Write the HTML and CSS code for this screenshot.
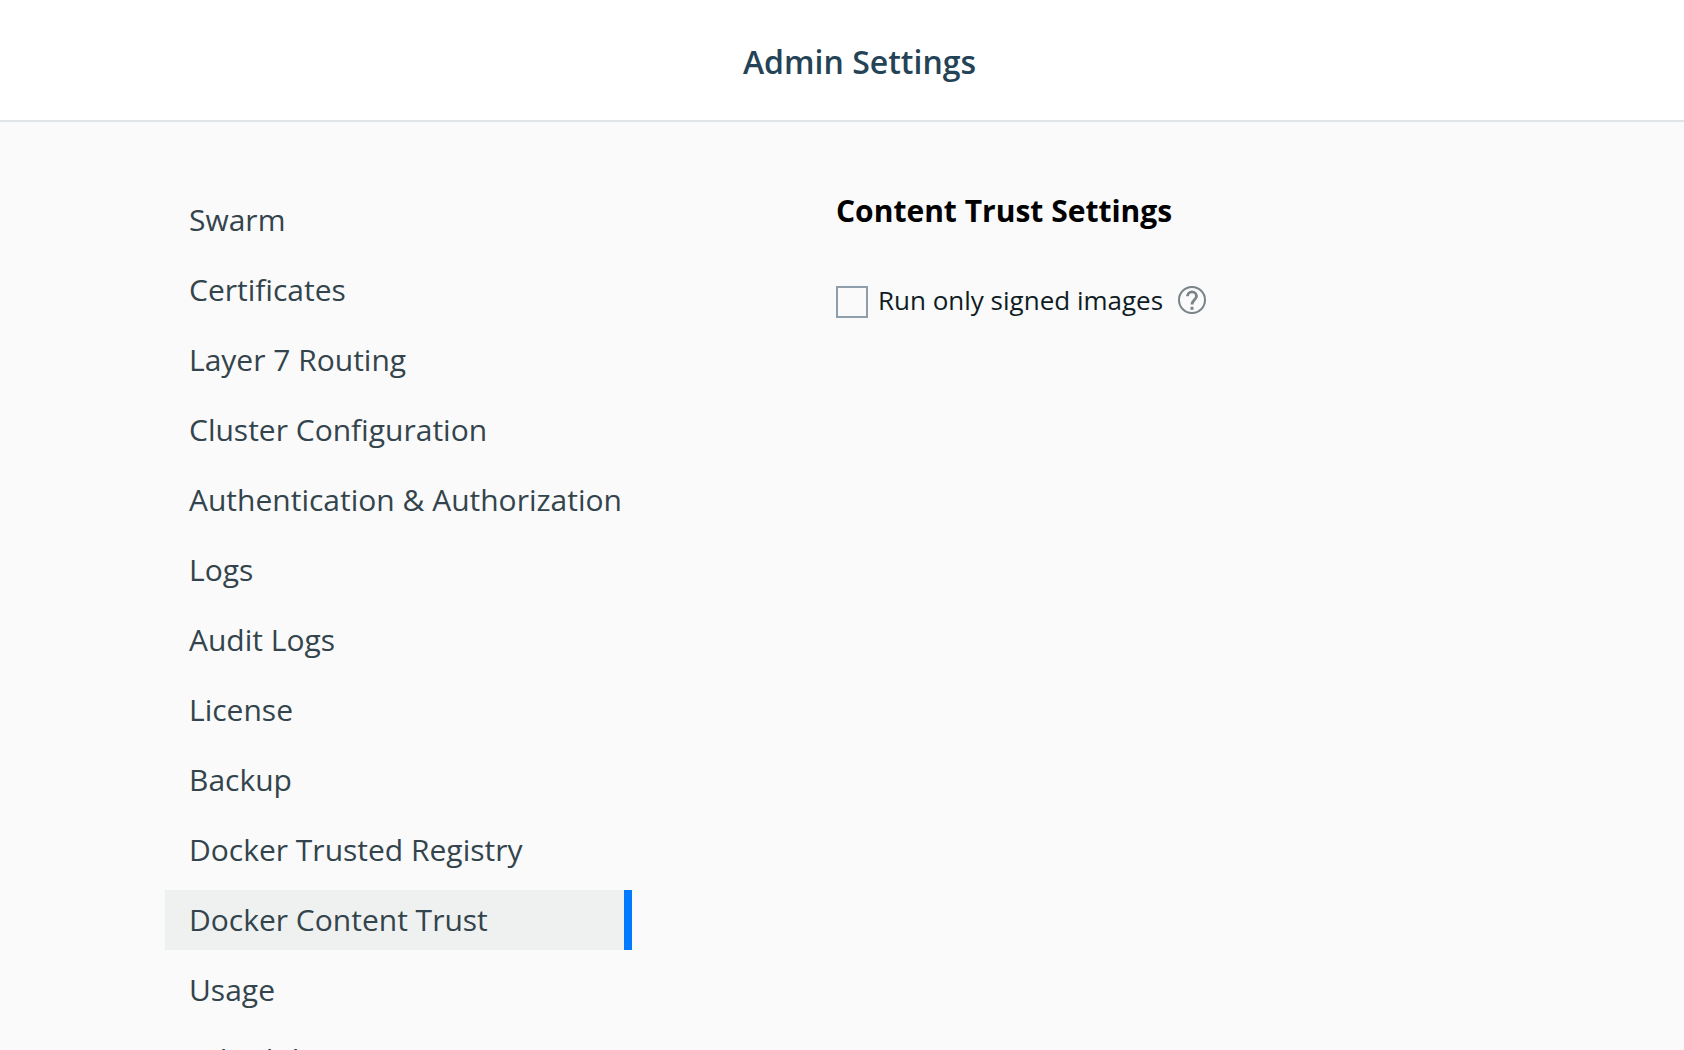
FILE: index.html
```html
<!DOCTYPE html>
<html lang="en">
<head>
<meta charset="utf-8">
<title>Admin Settings</title>
<link rel="stylesheet" href="styles.css">
</head>
<body>
<header class="header"><h1 class="header-title">Admin Settings</h1></header>
<div class="layout">
  <nav class="nav" aria-label="Settings">
    <a class="nav-link" href="#swarm">Swarm</a>
    <a class="nav-link" href="#certificates">Certificates</a>
    <a class="nav-link" href="#routing">Layer 7 Routing</a>
    <a class="nav-link" href="#cluster">Cluster Configuration</a>
    <a class="nav-link" href="#auth">Authentication &amp; Authorization</a>
    <a class="nav-link" href="#logs">Logs</a>
    <a class="nav-link" href="#audit">Audit Logs</a>
    <a class="nav-link" href="#license">License</a>
    <a class="nav-link" href="#backup">Backup</a>
    <a class="nav-link" href="#dtr">Docker Trusted Registry</a>
    <a class="nav-link nav-link-active" href="#trust" aria-current="page">Docker Content Trust</a>
    <a class="nav-link" href="#usage">Usage</a>
    <a class="nav-link" href="#scheduler">Scheduler</a>
  </nav>
  <main class="content">
    <h2 class="content-title">Content Trust Settings</h2>
    <div class="option">
      <input class="option-box" type="checkbox" id="signed">
      <label class="option-label" for="signed">Run only signed images</label>
      <button class="help" type="button" aria-label="Help">
        <svg class="help-icon" viewBox="0 0 28 28" fill="none" stroke="currentColor" stroke-width="2"><circle cx="14" cy="14" r="13"/><path d="M9.500 10.300a4.500 4.500 0 0 1 9 0c0 3.200-4.500 4-4.500 8.200" stroke-width="2.800"/><path d="M14 20.800v3" stroke-width="3"/></svg>
      </button>
    </div>
  </main>
</div>
</body>
</html>
```

FILE: styles.css
```css
* { box-sizing: border-box; }
html { height: 100%; overflow: hidden; }
body {
  margin: 0;
  height: 100%;
  overflow: hidden;
  background: #fafafa;
  color: #000;
  font-family: "Open Sans", sans-serif;
}
.header {
  display: flex;
  align-items: center;
  justify-content: center;
  height: 122px;
  padding: 4px 0 0 35px;
  background: #fff;
  border-bottom: 2px solid #e0e4e7;
}
.header-title {
  margin: 0;
  color: #254356;
  font-size: 32px;
  line-height: 44px;
  font-weight: 600;
}
.layout {
  display: grid;
  grid-template-columns: 467px 1fr;
  column-gap: 204px;
  padding: 68px 165px 0;
}
.nav { display: flex; flex-direction: column; gap: 10px; }
.nav-link {
  padding: 9px 24px;
  color: #33444c;
  font-size: 30px;
  line-height: 42px;
  text-decoration: none;
  white-space: nowrap;
}
.nav-link-active { background: #eff1f1; border-right: 8px solid #007bff; }
.content-title { margin: 0; font-size: 30px; line-height: 42px; font-weight: 700; }
.option { display: flex; align-items: flex-start; margin-top: 54px; }
.option-box {
  appearance: none;
  width: 32px;
  height: 32px;
  margin: 0;
  background: #fafafa;
  border: 2px solid #8f9eab;
}
.option-label { margin-left: 10px; color: #0f1c24; font-size: 26px; line-height: 28px; }
.help {
  display: flex;
  margin: 0 0 0 15px;
  padding: 0;
  border: 0;
  background: none;
  color: #7a8387;
}
.help-icon { width: 28px; height: 28px; }
```
